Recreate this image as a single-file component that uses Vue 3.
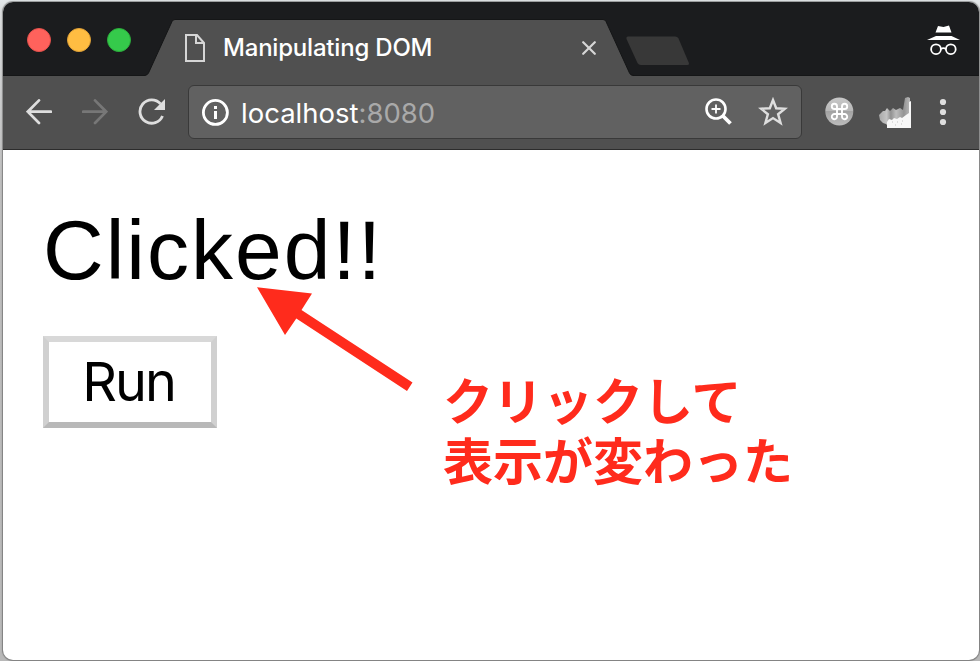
<script setup>
import { ref } from 'vue'

const message = ref('Clicked!!')
function run() {
  message.value = 'Clicked!!'
}
</script>

<template>
  <div class="desktop">
    <div class="window">
      <header class="tabstrip">
        <div class="lights">
          <i class="light red"></i><i class="light yellow"></i><i class="light green"></i>
        </div>
        <div class="tab">
          <svg class="tab-shape" width="488" height="58" viewBox="0 0 488 58">
            <path d="M-3 58V56.500Q-.500 56 .5 54L24 2.500Q25 .5 27 .5H455Q457 .5 458 2.500L481.500 54Q482.500 56.500 484.500 56.500L486 58Z" fill="#505050" />
            <path d="M-3 56.500Q-.500 56 .5 54L24 2.500Q25 .5 27 .5H455Q457 .5 458 2.500L481.500 54Q482.500 56.500 486 56.500" fill="none" stroke="#151617" />
          </svg>
          <svg class="page-icon" width="20" height="28" viewBox="0 0 20 28" fill="none" stroke="#d6d6d6" stroke-width="2">
            <path d="M1 1H12L19 9V27H1Z" /><path d="M11 1V9H19" />
          </svg>
          <span class="tab-title">Manipulating DOM</span>
          <svg class="close" width="14" height="14" viewBox="0 0 14 14" fill="none" stroke="#d6d6d6" stroke-width="2.200" stroke-linecap="round">
            <path d="M1.200 1.200L12.800 12.800M12.800 1.200L1.200 12.800" />
          </svg>
        </div>
        <svg class="new-tab" width="64" height="30" viewBox="0 0 64 30">
          <path d="M2 .5H49Q51.500.5 52.500 2.500L62.700 26.500Q63.500 29 61.500 29H15Q12.500 29 11.500 27L.5 3Q0 .5 2 .5Z" fill="#383838" />
        </svg>
        <svg class="incognito" width="33" height="31" viewBox="0 0 33 31">
          <path d="M11 1L16.500 2L22 .5L24.500 7.500H8.500Z" fill="#fff" />
          <path d="M9 11H24.500L33 15H0Z" fill="#fff" />
          <g fill="none" stroke="#fff" stroke-width="1.800">
            <circle cx="9" cy="24.200" r="4.900" /><circle cx="23.800" cy="24.200" r="4.900" />
            <path d="M13.800 24Q16.400 22.300 19 24" />
          </g>
        </svg>
      </header>

      <nav class="toolbar">
        <svg class="back" width="26" height="26" viewBox="0 0 26 26" fill="none" stroke="#dedede" stroke-width="2.700" stroke-linecap="round">
          <path d="M25 12.700H2M13 1.400L1.800 12.700L13 24" />
        </svg>
        <svg class="forward" width="26" height="26" viewBox="0 0 26 26" fill="none" stroke="#777" stroke-width="2.700" stroke-linecap="round">
          <path d="M1 12.700H24M13 1.400L24.200 12.700L13 24" />
        </svg>
        <svg class="reload" width="28" height="28" viewBox="0 0 28 28">
          <path d="M22.500 5.800A11.700 11.700 0 1 0 24.500 18" fill="none" stroke="#dedede" stroke-width="2.800" />
          <path d="M27 1V12H16Z" fill="#dedede" />
        </svg>
        <div class="omnibox">
          <svg class="info" width="28" height="28" viewBox="0 0 28 28">
            <circle cx="14.400" cy="14.400" r="12" fill="none" stroke="#fff" stroke-width="2.800" />
            <path d="M13 8h3v3h-3zM13 13h3v8h-3z" fill="#fff" />
          </svg>
          <span class="url">localhost<span class="port">:8080</span></span>
          <svg class="zoom" width="27" height="27" viewBox="0 0 27 27" fill="none" stroke="#fff">
            <circle cx="11" cy="11" r="9.500" stroke-width="2.600" />
            <path d="M11 6.500V15.500M6.500 11H15.500" stroke-width="1.800" />
            <path d="M18 18L25.500 25.500" stroke-width="3.800" />
          </svg>
          <svg class="star" width="30" height="29" viewBox="0 0 30 29">
            <path d="M15 3L18.200 11.300L26.900 11.700L20.100 17.200L22.600 26L15 21.100L7.400 26L9.900 17.200L3.100 11.700L11.800 11.300Z" fill="none" stroke="#dedede" stroke-width="2.400" />
          </svg>
        </div>
        <svg class="command" width="29" height="29" viewBox="0 0 29 29">
          <defs>
            <linearGradient id="disc" x1="0" y1="0" x2="0" y2="1">
              <stop offset="0" stop-color="#c8c8c8" /><stop offset=".49" stop-color="#b7b7b7" />
              <stop offset=".5" stop-color="#a3a3a3" /><stop offset="1" stop-color="#bcbcbc" />
            </linearGradient>
          </defs>
          <circle cx="14.300" cy="14.500" r="14" fill="url(#disc)" />
          <path d="M12 12V9.200A2.600 2.600 0 1 0 9.400 12H19.600A2.600 2.600 0 1 0 17 9.400V19.400A2.600 2.600 0 1 0 19.600 17H9.400A2.600 2.600 0 1 0 12 19.400Z" fill="none" stroke="#fff" stroke-width="1.900" />
        </svg>
        <svg class="factory" width="33" height="32" viewBox="0 0 33 32">
          <defs>
            <linearGradient id="smoke" x1="0" y1="0" x2="1" y2="0">
              <stop offset="0" stop-color="#a8a8a8" /><stop offset=".25" stop-color="#c4c4c4" />
              <stop offset=".38" stop-color="#909090" /><stop offset=".55" stop-color="#bcbcbc" />
              <stop offset=".8" stop-color="#949494" /><stop offset="1" stop-color="#b8b8b8" />
            </linearGradient>
            <filter id="soft"><feGaussianBlur stdDeviation=".7" /></filter>
          </defs>
          <path d="M0 19L4 15L6 15L8 12L11 15L14 12L17 14L21 12L24 14L26 2L29 1L31 2V31H10L7 28L4 27L1 24Z" fill="url(#smoke)" filter="url(#soft)" />
          <path d="M8 32V26L10 23L13 24L15 22L18 23L21 21L23 22L27 19L30 17V6L32 5V32Z" fill="#f7f7f7" />
          <path d="M13 26H14M18 26H19M23 25H24M16 29H17M22 28H23" stroke="#d3d3d3" stroke-width="1.500" />
        </svg>
        <svg class="menu" width="8" height="28" viewBox="0 0 8 28" fill="#dedede">
          <circle cx="4" cy="4" r="3.100" /><circle cx="4" cy="14" r="3.100" /><circle cx="4" cy="24" r="3.100" />
        </svg>
      </nav>

      <main class="page">
        <p class="message">{{ message }}</p>
        <button class="run" @click="run">Run</button>
      </main>
    </div>

    <svg class="arrow" width="156" height="106" viewBox="0 0 156 106">
      <path d="M0 .2L55 6.500L44.500 23L155.500 95.500L150 104L39.300 31.500L28 48Z" fill="#ff2b1c" />
    </svg>
    <p class="note">クリックして<br />表示が変わった</p>
  </div>
</template>

<style>
body { background: #d4d6d7; overflow: hidden; }
</style>

<style scoped>
* { box-sizing: border-box; }
svg { display: block; flex: none; }
.desktop {
  position: relative;
  width: 980px;
  height: 661px;
  padding: 2px 1px 1px 3px;
  background: linear-gradient(#e3e7e9 0, #dadcdd 12px, #bebebe 180px, #b8b8b8 100%);
}
.window {
  display: flex;
  flex-direction: column;
  height: 658px;
  border-radius: 10px;
  overflow: hidden;
  background: #fff;
  box-shadow: 0 0 1px 1px rgba(70, 70, 70, .5);
}
.tabstrip {
  display: flex;
  height: 74px;
  background: #1b1c1e;
  border-bottom: 1px solid #151617;
}
.lights { display: flex; gap: 16px; padding: 26px 0 0 24px; width: 145px; flex: none; }
.light { width: 24px; height: 24px; border-radius: 50%; border: 1px solid; }
.red { background: #ff625c; border-color: #e4504b; }
.yellow { background: #ffbd42; border-color: #dfa036; }
.green { background: #35ca4b; border-color: #2bac3b; }
.tab {
  position: relative;
  display: flex;
  width: 488px;
  height: 58px;
  margin-top: 17px;
  flex: none;
}
.tab-shape { position: absolute; left: 0; top: 0; overflow: visible; }
.page-icon { margin: 15px 0 0 37px; position: relative; }
.tab-title {
  position: relative;
  margin: 15px 0 0 18px;
  width: 351px;
  font: 500 24px/28px Inter, sans-serif;
  letter-spacing: -.2px;
  color: #fff;
  white-space: nowrap;
}
.close { position: relative; margin-top: 22px; margin-left: 8px; }
.new-tab { margin: 34px 0 0 -10px; }
.incognito { margin: 23px 19px 0 auto; }
.toolbar {
  display: flex;
  height: 74px;
  background: #505050;
  border-bottom: 1px solid #2c2c2c;
}
.back { margin: 23px 0 0 23px; }
.forward { margin: 23px 0 0 30px; }
.reload { margin: 22px 0 0 30px; }
.omnibox {
  display: flex;
  width: 614px;
  height: 54px;
  margin: 9px 0 0 22px;
  background: #616161;
  border: 1px solid #393939;
  border-radius: 6px;
}
.info { margin: 12px 0 0 12px; }
.url {
  margin: 10px 0 0 12px;
  width: 464px;
  font: 400 27.500px/34px Inter, sans-serif;
  color: #fff;
  white-space: nowrap;
}
.port { color: #a9a9a9; }
.zoom { margin: 12px 0 0 0; }
.star { margin: 11px 0 0 26px; }
.command { margin: 21px 0 0 23px; }
.factory { margin: 20px 0 0 25px; }
.menu { margin: 22px 0 0 27px; }
.page { padding: 50px 40px; }
.message {
  margin: 0;
  font: 400 84px/100px "Liberation Sans", sans-serif;
  letter-spacing: 2px;
  color: #000;
  white-space: nowrap;
}
.run {
  display: block;
  width: 174px;
  height: 92px;
  margin: 36px 0 0;
  padding: 0 3px 0 0;
  background: #fff;
  border: 6px solid;
  border-color: #d8d8d8 #d0d0d0 #b8b8b8 #d0d0d0;
  border-radius: 0;
  font: 400 54px/76px Inter, sans-serif;
  letter-spacing: -2px;
  color: #000;
}
.arrow { position: absolute; left: 257px; top: 287px; }
.note {
  position: absolute;
  left: 443px;
  top: 373px;
  margin: 0;
  font: 700 50px/60px "Liberation Sans", "Noto Sans CJK JP", sans-serif;
  color: #ff2b1c;
  white-space: nowrap;
}
</style>
